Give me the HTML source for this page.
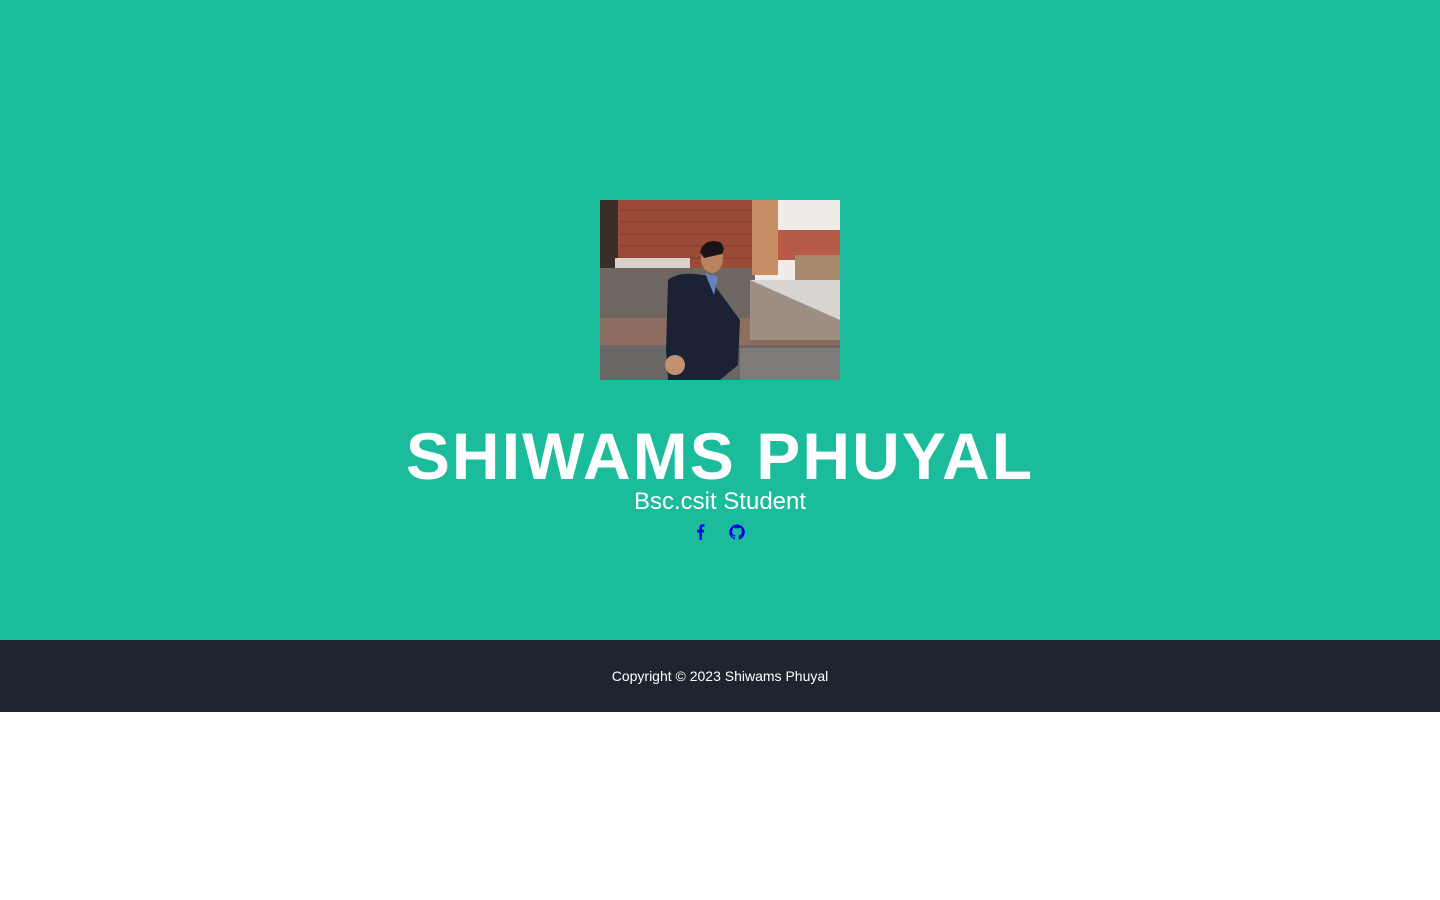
<!DOCTYPE html>
<html><head><meta charset="utf-8"><style>
html,body{margin:0;padding:0;background:#fff;width:1440px;height:900px;overflow:hidden;font-family:"Liberation Sans",sans-serif}
.hero{position:absolute;left:0;top:0;width:1440px;height:640px;background:#1abc9c}
.photo{position:absolute;left:600px;top:200px;width:240px;height:180px}
h1{position:absolute;left:0;width:1440px;top:413px;margin:0;text-align:center;color:#fff;font-size:66px;font-weight:bold;letter-spacing:2.1px;line-height:86px}
.sub{position:absolute;left:0;width:1440px;top:487px;text-align:center;color:#fff;font-size:24px;line-height:30px}
.icons{position:absolute;left:690px;top:522px}
footer{position:absolute;left:0;top:640px;width:1440px;height:72px;background:#1e2430;color:#fff;text-align:center;font-size:14px;line-height:72px}
</style></head><body>
<div class="hero">
<svg class="photo" viewBox="0 0 240 180" width="240" height="180">
<rect width="240" height="180" fill="#8a6a5a"/>
<rect x="0" y="0" width="155" height="80" fill="#9a4a36"/>
<g stroke="#6e3426" stroke-width="1" opacity=".6"><path d="M20 10H155M20 22H155M20 34H155M20 46H155M20 58H155"/></g>
<rect x="0" y="0" width="18" height="70" fill="#3a2e28"/>
<rect x="15" y="58" width="75" height="10" fill="#d8d2cc"/>
<rect x="0" y="68" width="155" height="50" fill="#6e6660"/>
<rect x="155" y="0" width="85" height="80" fill="#f0ece8"/>
<rect x="152" y="0" width="26" height="75" fill="#c78e66"/>
<rect x="178" y="30" width="62" height="30" fill="#b85a48"/>
<rect x="195" y="55" width="45" height="25" fill="#a88a6a"/>
<rect x="150" y="80" width="90" height="60" fill="#d8d4d0"/>
<path d="M150 80L240 120V140H150Z" fill="#9e8e84"/>
<rect x="0" y="118" width="150" height="30" fill="#8e6e60"/>
<rect x="0" y="145" width="240" height="35" fill="#6a6664"/>
<rect x="140" y="148" width="100" height="32" fill="#7e7a78"/>
<path d="M68 80Q80 70 108 76L118 90L140 120L138 165L120 180H68L66 150Z" fill="#1c2235"/>
<ellipse cx="112" cy="58" rx="11" ry="15" fill="#b88460"/>
<path d="M100 52Q104 38 120 42Q126 48 122 54L104 58Z" fill="#1a1416"/>
<path d="M105 73L118 77L114 95Z" fill="#6a80c0"/>
<ellipse cx="75" cy="165" rx="10" ry="10" fill="#c09070"/>
</svg>
<h1>SHIWAMS PHUYAL</h1>
<div class="sub">Bsc.csit Student</div>
<div class="icons">
<svg width="60" height="20" viewBox="0 0 60 20">
<path d="M9.5 18V10.5H7V7.8H9.5V5.8C9.5 3.5 10.8 2.3 12.8 2.3C13.6 2.3 14.3 2.4 14.4 2.4V4.8H13.1C12.1 4.8 11.9 5.3 11.9 6V7.8H14.3L13.9 10.5H11.9V18Z" fill="#0000ee"/>
<g transform="translate(39,2)"><path d="M8 0.5A7.7 7.7 0 0 0 5.6 15.5C6 15.6 6.1 15.3 6.1 15.1V13.7C3.9 14.2 3.5 12.7 3.5 12.7C3.1 11.8 2.6 11.5 2.6 11.5C1.9 11 2.7 11 2.7 11C3.5 11.1 3.9 11.8 3.9 11.8C4.6 13 5.7 12.7 6.2 12.5C6.3 12 6.5 11.6 6.7 11.4C5 11.2 3.2 10.6 3.2 7.6C3.2 6.8 3.5 6.1 4 5.6C3.9 5.4 3.6 4.6 4.1 3.6C4.1 3.6 4.8 3.4 6.2 4.4A7.3 7.3 0 0 1 10 4.4C11.4 3.4 12 3.6 12 3.6C12.5 4.6 12.2 5.4 12.1 5.6C12.6 6.1 12.9 6.8 12.9 7.6C12.9 10.6 11.1 11.2 9.4 11.4C9.7 11.7 9.9 12.1 9.9 12.8V15.1C9.9 15.3 10 15.6 10.5 15.5A7.7 7.7 0 0 0 8 0.5Z" fill="#0000ee"/></g>
</svg>
</div>
</div>
<footer>Copyright © 2023 Shiwams Phuyal</footer>
</body></html>
